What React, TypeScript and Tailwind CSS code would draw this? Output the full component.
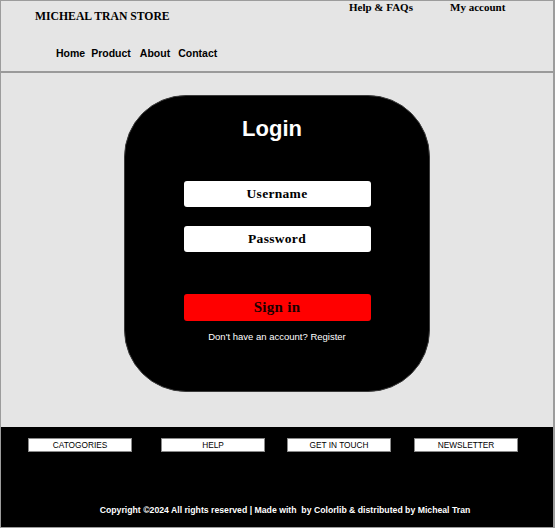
export default function App() {
  return (
    <div className="flex h-[528px] w-[555px] flex-col border border-r-2 border-[#9c9c9c] bg-[#e5e5e5]">
      {/* Header */}
      <header className="h-[72px] shrink-0 border-b-2 border-[#9a9a9a]">
        <div className="grid grid-cols-[348px_101px_1fr] font-['Liberation_Serif',serif] font-bold text-black">
          <div className="pl-[34px] pt-[9px] text-[11.7px] leading-[14px]">MICHEAL TRAN STORE</div>
          <div className="text-[11px] leading-[13px]">Help &amp; FAQs</div>
          <div className="text-[11px] leading-[13px]">My account</div>
        </div>
        <nav className="mt-[22px] flex pl-[55px] font-['Liberation_Sans',Arial,sans-serif] text-[10.5px] font-bold leading-[14px] text-black">
          <span className="mr-[6px]">Home</span>
          <span className="mr-[9px]">Product</span>
          <span className="mr-[8px]">About</span>
          <span>Contact</span>
        </nav>
      </header>

      {/* Login card */}
      <main className="flex flex-1 justify-center pt-[22px]">
        <div className="flex h-[297px] w-[306px] flex-col items-center rounded-[62px] border border-[#3a3a3a] bg-black">
          <h1 className="mt-[19px] pr-[10px] font-['Liberation_Sans',Arial,sans-serif] text-[22px] font-bold leading-[28px] text-white">Login</h1>
          <div className="mt-[38px] flex h-[26px] w-[187px] items-center justify-center rounded-[3px] bg-white font-['Liberation_Serif',serif] text-[13.5px] font-bold tracking-[0.3px] text-black">
            Username
          </div>
          <div className="mt-[19px] flex h-[26px] w-[187px] items-center justify-center rounded-[3px] bg-white font-['Liberation_Serif',serif] text-[13.5px] font-bold tracking-[0.3px] text-black">
            Password
          </div>
          <button className="mt-[42px] flex h-[27px] w-[187px] items-center justify-center rounded-[3px] bg-[#ff0000] font-['Liberation_Serif',serif] text-[15px] font-bold tracking-[0.3px] text-[#1a0000]">
            Sign in
          </button>
          <p className="mt-[10px] font-['Liberation_Sans',Arial,sans-serif] text-[9.5px] leading-[12px] text-white">
            Don't have an account? Register
          </p>
        </div>
      </main>

      {/* Footer */}
      <footer className="flex h-[100px] shrink-0 flex-col bg-black font-['Liberation_Sans',Arial,sans-serif]">
        <div className="mt-[11px] flex pl-[27px] text-[8.3px] leading-[12px] text-black">
          <div className="flex h-[14px] w-[104px] items-center justify-center border border-[#8a8a8a] bg-white">CATOGORIES</div>
          <div className="ml-[29px] flex h-[14px] w-[104px] items-center justify-center border border-[#8a8a8a] bg-white">HELP</div>
          <div className="ml-[22px] flex h-[14px] w-[104px] items-center justify-center border border-[#8a8a8a] bg-white">GET IN TOUCH</div>
          <div className="ml-[23px] flex h-[14px] w-[104px] items-center justify-center border border-[#8a8a8a] bg-white">NEWSLETTER</div>
        </div>
        <p className="mt-auto mb-[11px] pl-[16px] text-center text-[8.7px] font-bold leading-[12px] text-white">
          Copyright ©2024 All rights reserved | Made with &nbsp;by Colorlib &amp; distributed by Micheal Tran
        </p>
      </footer>
    </div>
  );
}
